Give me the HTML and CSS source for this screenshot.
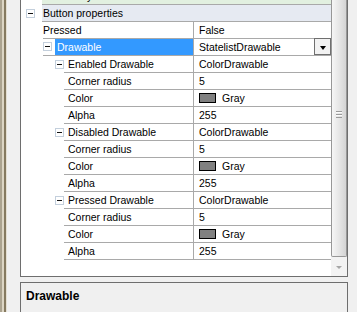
FILE: index.html
```html
<!DOCTYPE html>
<html>
<head>
<meta charset="utf-8">
<link rel="stylesheet" href="styles.css">
</head>
<body>
<div class="edge"></div>
<div class="gutter"></div>
<div class="main">
  <div class="grid">
    <div class="rows">
      <div class="row top-row">
        <div class="cat-indent"></div>
        <div class="green">Text Style</div>
      </div>
      <div class="row cat">
        <div class="cat-indent"><span class="box"></span></div>
        <div class="cat-name">Button properties</div>
      </div>
      <div class="row">
        <div class="ind1"></div>
        <div class="name">Pressed</div>
        <div class="val">False</div>
      </div>
      <div class="row">
        <div class="ind1"></div>
        <div class="name exp"><span class="box"></span><span class="sel">Drawable</span></div>
        <div class="val">StatelistDrawable<span class="drop"><span class="tri"></span></span></div>
      </div>
      <div class="row">
        <div class="ind2"><span class="box"></span></div>
        <div class="name n2">Enabled Drawable</div>
        <div class="val">ColorDrawable</div>
      </div>
      <div class="row">
        <div class="ind3"></div>
        <div class="name n3">Corner radius</div>
        <div class="val">5</div>
      </div>
      <div class="row">
        <div class="ind3"></div>
        <div class="name n3">Color</div>
        <div class="val"><span class="swatch"></span>Gray</div>
      </div>
      <div class="row">
        <div class="ind3"></div>
        <div class="name n3">Alpha</div>
        <div class="val">255</div>
      </div>
      <div class="row">
        <div class="ind2"><span class="box"></span></div>
        <div class="name n2">Disabled Drawable</div>
        <div class="val">ColorDrawable</div>
      </div>
      <div class="row">
        <div class="ind3"></div>
        <div class="name n3">Corner radius</div>
        <div class="val">5</div>
      </div>
      <div class="row">
        <div class="ind3"></div>
        <div class="name n3">Color</div>
        <div class="val"><span class="swatch"></span>Gray</div>
      </div>
      <div class="row">
        <div class="ind3"></div>
        <div class="name n3">Alpha</div>
        <div class="val">255</div>
      </div>
      <div class="row">
        <div class="ind2"><span class="box"></span></div>
        <div class="name n2">Pressed Drawable</div>
        <div class="val">ColorDrawable</div>
      </div>
      <div class="row">
        <div class="ind3"></div>
        <div class="name n3">Corner radius</div>
        <div class="val">5</div>
      </div>
      <div class="row">
        <div class="ind3"></div>
        <div class="name n3">Color</div>
        <div class="val"><span class="swatch"></span>Gray</div>
      </div>
      <div class="row">
        <div class="ind3"></div>
        <div class="name n3">Alpha</div>
        <div class="val">255</div>
      </div>
    </div>
    <div class="scroll">
      <div class="thumb"><span class="grip"></span></div>
      <div class="down"><span class="dtri"></span></div>
    </div>
  </div>
  <div class="desc">Drawable</div>
</div>
</body>
</html>
```
FILE: styles.css
```css
* { box-sizing: border-box; }
html, body { margin: 0; padding: 0; }
body {
  width: 357px; height: 312px; overflow: hidden;
  background: #f0f0f0;
  display: flex;
  font-family: "Liberation Sans", Arial, sans-serif;
  font-size: 10.5px;
  color: #000;
}
.edge {
  width: 7px; flex: none;
  background: linear-gradient(to right, #aba38f 0, #aba38f 2px, #dcd5c3 2px, #dcd5c3 4px, #85795f 4px, #85795f 6px, #e4dfd2 6px);
}
.gutter { width: 13px; flex: none; }
.main { width: 328px; flex: none; display: flex; flex-direction: column; }
.grid {
  height: 277px; flex: none;
  border: 1px solid #6e6e6e; border-top: none;
  background: #fff;
  display: flex; overflow: hidden;
}
.rows { width: 310px; flex: none; display: flex; flex-direction: column; }
.row { display: flex; height: 17px; line-height: 16px; flex: none; white-space: nowrap; }
.top-row { margin-top: -12px; }
.green { flex: 1; background: #e2f0e0; border-bottom: 1px solid #a9a9a9; padding-left: 13px; }
.cat-indent { width: 21px; flex: none; display: flex; align-items: center; padding-left: 5px; padding-bottom: 1px; }
.cat-name { flex: 1; background: #e6eaf2; border-bottom: 1px solid #a9a9a9; padding-left: 1px; }
.box {
  width: 9px; height: 9px; flex: none;
  border: 1px solid #c3cfdc; background: #fff;
  display: flex; align-items: center; justify-content: center;
}
.box::before { content: ""; width: 5px; height: 1px; background: #111; }
.ind1 { width: 22px; flex: none; }
.ind2 { width: 43px; flex: none; display: flex; align-items: center; justify-content: flex-end; padding-bottom: 1px; }
.ind3 { width: 43px; flex: none; }
.name { flex: 1; border-bottom: 1px solid #a9a9a9; overflow: hidden; }
.exp { display: flex; align-items: center; }
.exp .box { margin-bottom: 1px; }
.sel { flex: 1; margin-left: 3px; background: #3399ff; color: #fff; padding-left: 2px; height: 16px; align-self: flex-start; }
.n2 { padding-left: 4px; }
.n3 { padding-left: 4px; }
.val {
  width: 138px; flex: none;
  border-left: 1px solid #a9a9a9; border-bottom: 1px solid #a9a9a9;
  padding-left: 5px;
  display: flex; align-items: center;
  position: relative;
}
.swatch { width: 17px; height: 10px; border: 1px solid #000; background: #808080; margin-right: 6px; flex: none; }
.drop {
  position: absolute; right: 0; top: -1px;
  width: 17px; height: 17px;
  border: 1px solid #6f6f6f; background: #f2f2f2;
  display: flex; align-items: center; justify-content: center;
}
.tri { width: 0; height: 0; border-left: 3.5px solid transparent; border-right: 3.5px solid transparent; border-top: 4px solid #000; margin-top: 2px; }
.scroll { flex: 1; display: flex; flex-direction: column; background: #f3f3f3; }
.thumb {
  flex: 1; margin-bottom: 1px;
  border: 1px solid #979797; border-top: none; border-radius: 0 0 2px 2px;
  background: linear-gradient(to right, #f6f6f6, #e6e6e6 50%, #d4d4d4);
  display: flex; align-items: flex-start; justify-content: center;
  padding-top: 111px;
}
.grip {
  width: 6px; height: 7px;
  background: repeating-linear-gradient(to bottom, #9a9a9a 0, #9a9a9a 1px, #fbfbfb 1px, #fbfbfb 2px, transparent 2px, transparent 3px);
}
.down { height: 18px; flex: none; display: flex; align-items: center; justify-content: center; }
.dtri { width: 0; height: 0; border-left: 3.5px solid transparent; border-right: 3.5px solid transparent; border-top: 3px solid #a6a6a6; }
.desc {
  margin-top: 5px; flex: 1;
  border: 1px solid #6e6e6e; border-bottom: none;
  padding: 6px 0 0 5px;
  font-size: 12px;
  font-weight: bold;
}
```
